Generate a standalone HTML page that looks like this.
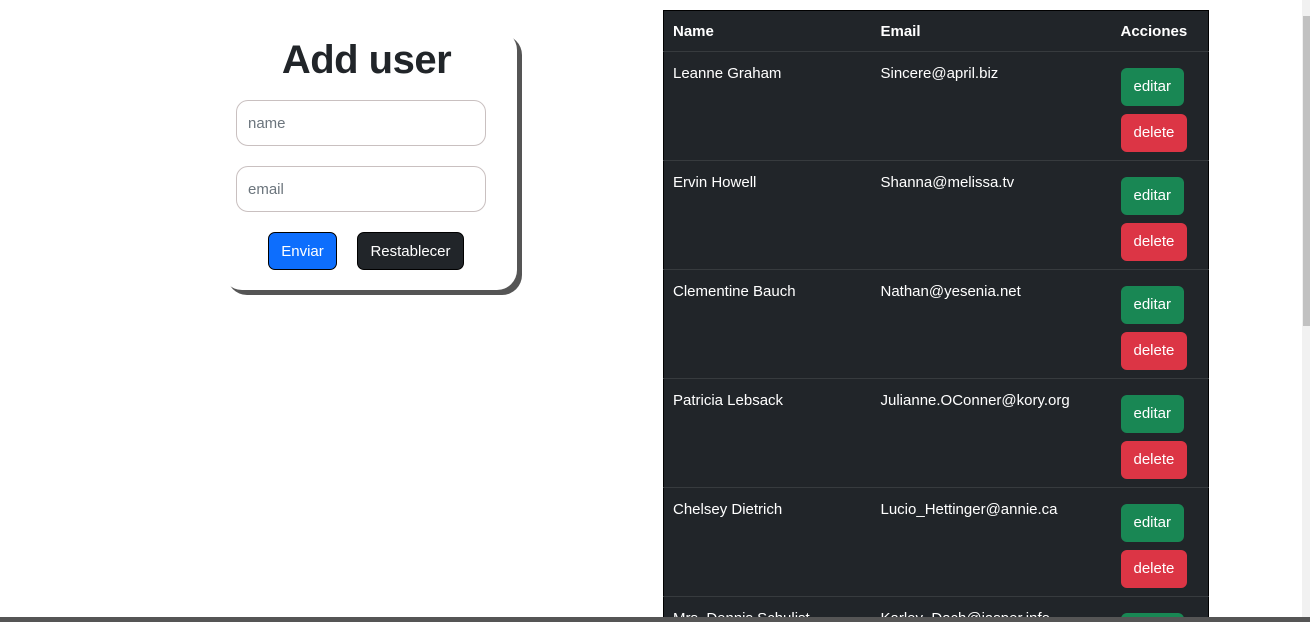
<!DOCTYPE html>
<html><head><style>
*{box-sizing:border-box;margin:0;padding:0}
html,body{width:1310px;height:622px;overflow:hidden}
body{background:#fff;font-family:"Liberation Sans",sans-serif;position:relative}
.card{position:absolute;left:222px;top:30px;width:295px;height:260px;border-radius:20px;background:#fff;box-shadow:5px 5px 0 #555}
.card h1{position:absolute;left:0;right:0;top:8px;text-align:center;font-size:40px;font-weight:bold;color:#212529;padding-right:6px;letter-spacing:-0.5px}
.inp{position:absolute;left:14px;width:250px;height:46px;border:1px solid #c9c0c0;border-radius:12px;font-size:15px;color:#6c757d;padding:14px 11px}
.btn{position:absolute;height:38px;border-radius:7px;color:#fff;font-size:15px;text-align:center;line-height:38px;border:1px solid #000}
.wrap{position:absolute;left:663px;top:10px;width:546px;height:607px;overflow:hidden}
table{width:546px;border-collapse:collapse;background:#212529;color:#fff;font-size:15px;border:1px solid #000}
th{text-align:left;font-weight:bold;height:41px;padding:0 9px;border-bottom:1px solid #373b3e}
td{vertical-align:top;padding:13px 9px 0;height:109px;border-bottom:1px solid #373b3e}
.e,.d{display:inline-block;height:38px;line-height:38px;border-radius:6px;padding:0 13px;color:#fff}
.e{background:#198754;margin-top:3px}.d{background:#dc3545;margin-top:8px}
</style></head><body>
<div class="card"><h1>Add user</h1>
<div class="inp" style="top:70px">name</div>
<div class="inp" style="top:136px">email</div>
<div class="btn" style="left:46px;top:202px;width:69px;background:#0d6efd">Enviar</div>
<div class="btn" style="left:135px;top:202px;width:107px;background:#212529">Restablecer</div>
</div>
<div class="wrap"><table>
<tr><th style="width:208px">Name</th><th style="width:240px">Email</th><th>Acciones</th></tr>
<tr><td>Leanne Graham</td><td>Sincere@april.biz</td><td><span class="e">editar</span><br><span class="d">delete</span></td></tr>
<tr><td>Ervin Howell</td><td>Shanna@melissa.tv</td><td><span class="e">editar</span><br><span class="d">delete</span></td></tr>
<tr><td>Clementine Bauch</td><td>Nathan@yesenia.net</td><td><span class="e">editar</span><br><span class="d">delete</span></td></tr>
<tr><td>Patricia Lebsack</td><td>Julianne.OConner@kory.org</td><td><span class="e">editar</span><br><span class="d">delete</span></td></tr>
<tr><td>Chelsey Dietrich</td><td>Lucio_Hettinger@annie.ca</td><td><span class="e">editar</span><br><span class="d">delete</span></td></tr>
<tr><td>Mrs. Dennis Schulist</td><td>Karley_Dach@jasper.info</td><td><span class="e">editar</span><br><span class="d">delete</span></td></tr>
</table></div>
<div style="position:absolute;left:1302px;top:0;width:8px;height:622px;background:#f1f1f1"></div>
<div style="position:absolute;left:1303px;top:16px;width:7px;height:310px;background:#c1c1c1"></div>
<div style="position:absolute;left:0;top:617px;width:1310px;height:5px;background:#555"></div>
</body></html>
